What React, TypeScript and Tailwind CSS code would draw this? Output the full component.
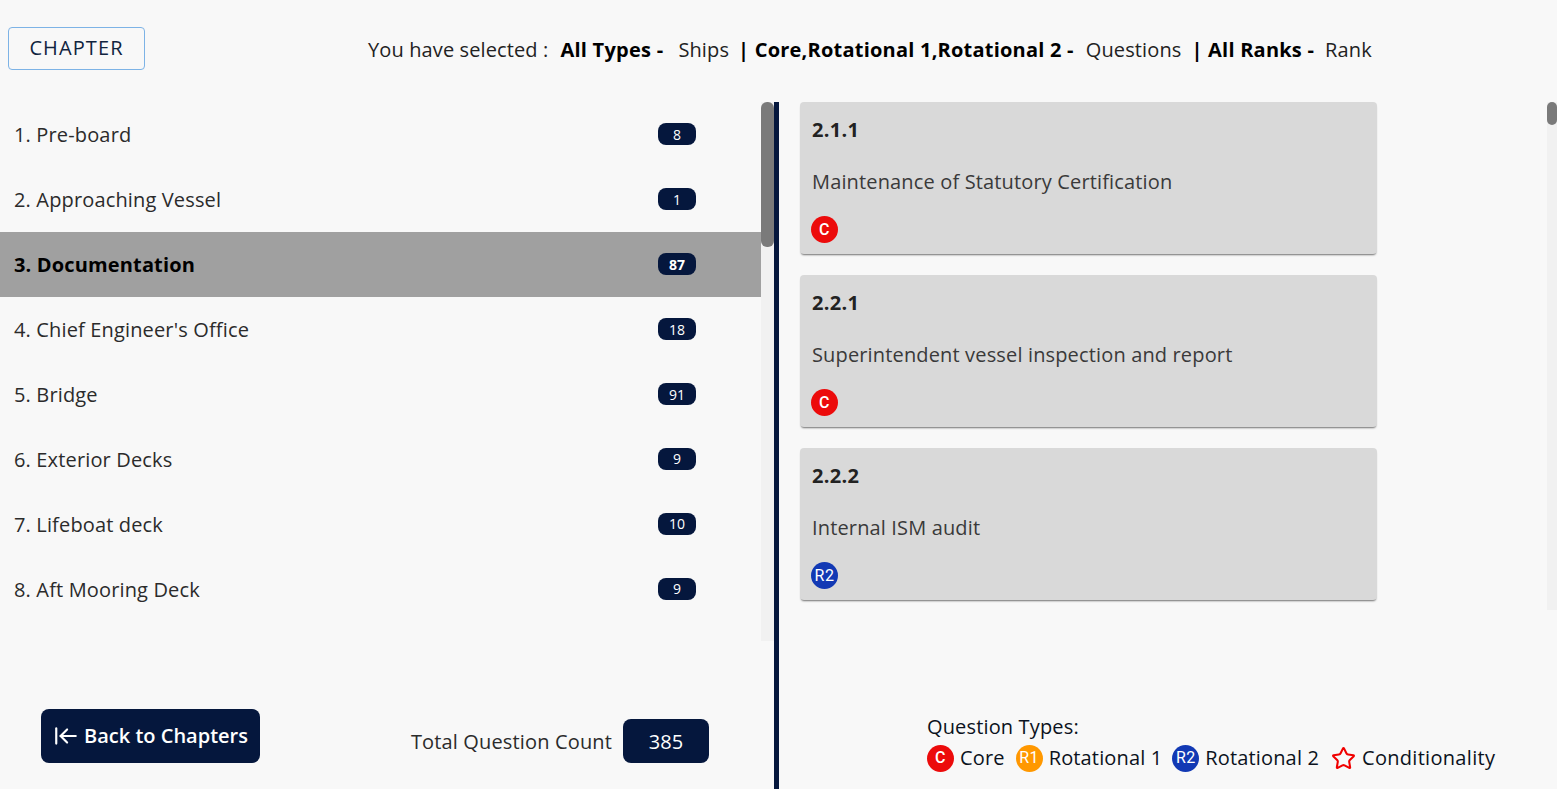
import React from "react";
import { ArrowLeftToLine, Star } from "lucide-react";

const CHAPTERS = [
  { name: "1. Pre-board", count: 8 },
  { name: "2. Approaching Vessel", count: 1 },
  { name: "3. Documentation", count: 87, active: true },
  { name: "4. Chief Engineer's Office", count: 18 },
  { name: "5. Bridge", count: 91 },
  { name: "6. Exterior Decks", count: 9 },
  { name: "7. Lifeboat deck", count: 10 },
  { name: "8. Aft Mooring Deck", count: 9 },
];

const QUESTIONS = [
  { code: "2.1.1", title: "Maintenance of Statutory Certification", type: "C" },
  { code: "2.2.1", title: "Superintendent vessel inspection and report", type: "C" },
  { code: "2.2.2", title: "Internal ISM audit", type: "R2" },
];

const TypeBadge = ({ type }: { type: string }) => {
  const color =
    type === "C" ? "bg-[#ec0b0b] font-medium" : type === "R1" ? "bg-[#ff9800]" : "bg-[#1239b4]";
  return (
    <span
      className={`${color} flex size-[27px] shrink-0 items-center justify-center rounded-full font-['Roboto',sans-serif] text-[16px] leading-none tracking-[0.5px] text-white`}
    >
      {type}
    </span>
  );
};

const App = () => {
  return (
    <div className="flex h-screen w-full flex-col overflow-hidden bg-[#f8f8f8] font-['Open_Sans','Liberation_Sans',sans-serif] text-black">
      <div className="flex h-[102px] shrink-0 items-start">
        <button className="ml-2 mt-[27px] h-[43px] w-[137px] rounded border border-[#7db3e6] pb-[2px] text-[20px] tracking-[1.1px] text-[#10243f]">
          CHAPTER
        </button>
        <p className="ml-[223px] mt-[35px] whitespace-nowrap text-[20px] leading-[30px] tracking-[0.12px] text-[#222]">
          You have selected :
          <b className="ml-3 font-bold tracking-[0.25px] text-black">All Types -</b>
          <span className="ml-[15px]">Ships</span>
          <b className="ml-[9px] font-bold tracking-[0.22px] text-black">| Core,Rotational 1,Rotational 2 -</b>
          <span className="ml-3">Questions</span>
          <b className="ml-[10px] font-bold tracking-[0.22px] text-black">| All Ranks -</b>
          <span className="ml-[11px]">Rank</span>
        </p>
      </div>

      <div className="flex min-h-0 flex-1">
        <div className="flex w-[774px] shrink-0 flex-col">
          <div className="flex h-[539px] shrink-0">
            <ul className="flex-1">
              {CHAPTERS.map((item) => (
                <li
                  key={item.name}
                  className={`flex h-[64.9px] items-center justify-between pl-[14px] pr-[65px] text-[20px] tracking-[0.15px] ${
                    item.active ? "bg-[#a0a0a0] font-bold text-black" : "text-[#2b2b2b]"
                  }`}
                >
                  <span className="pt-[2px]">{item.name}</span>
                  <span className="flex h-[22px] w-[38px] items-center justify-center rounded-lg bg-[#05173d] text-[14px] tracking-normal text-white">
                    {item.count}
                  </span>
                </li>
              ))}
            </ul>
            <div className="w-[13px] bg-[#f1f1f1]">
              <div className="h-[145px] rounded-md bg-[#7a7a7a]" />
            </div>
          </div>
          <div className="mt-[68px] flex items-end pl-[41px] pr-[65px]">
            <button className="flex h-[54px] w-[219px] items-center justify-center gap-[5px] rounded-lg bg-[#05173d] pb-[1px] text-[20px] font-semibold text-white">
              <ArrowLeftToLine size={26} strokeWidth={2} />
              Back to Chapters
            </button>
            <div className="ml-auto flex items-center gap-[11px]">
              <span className="pt-[2px] text-[20px] tracking-[0.15px] text-[#2b2b2b]">Total Question Count</span>
              <span className="flex h-[44px] w-[86px] items-center justify-center rounded-lg bg-[#05173d] pt-[2px] text-[20px] text-white">
                385
              </span>
            </div>
          </div>
        </div>

        <div className="w-[5px] shrink-0 bg-[#05173d]" />

        <div className="flex min-w-0 flex-1 flex-col">
          <div className="flex h-[508px] shrink-0 justify-between pl-[21px]">
            <div className="flex w-[577px] flex-col gap-[21.5px]">
              {QUESTIONS.map((q) => (
                <div
                  key={q.code}
                  className="flex h-[151.5px] flex-col rounded bg-[#d9d9d9] px-3 pt-[13px] shadow-[0_2px_2px_-1px_rgba(0,0,0,0.55)]"
                >
                  <p className="text-[20px] font-bold leading-[30px] tracking-[0.3px] text-[#222]">{q.code}</p>
                  <p className="mt-[22px] text-[20px] leading-[30px] tracking-[0.15px] text-[#3a3a3a]">{q.title}</p>
                  <div className="-ml-px mt-[19px]">
                    <TypeBadge type={q.type} />
                  </div>
                </div>
              ))}
            </div>
            <div className="w-[10px] bg-[#f1f1f1]">
              <div className="h-[23px] rounded-md bg-[#7a7a7a]" />
            </div>
          </div>
          <div className="ml-[148px] mt-[102px] text-[20px] leading-[30px] tracking-[0.15px] text-[#0b1220]">
            <p>Question Types:</p>
            <div className="mt-[1px] flex items-center whitespace-nowrap">
              <TypeBadge type="C" />
              <span className="ml-[6px]">Core</span>
              <span className="ml-[11px]">
                <TypeBadge type="R1" />
              </span>
              <span className="ml-[6px]">Rotational 1</span>
              <span className="ml-[10px]">
                <TypeBadge type="R2" />
              </span>
              <span className="ml-[6px]">Rotational 2</span>
              <Star className="ml-[12px] text-[#f00000]" size={25} strokeWidth={2} />
              <span className="ml-[6px] tracking-[0.3px]">Conditionality</span>
            </div>
          </div>
        </div>
      </div>
    </div>
  );
};

export default App;
